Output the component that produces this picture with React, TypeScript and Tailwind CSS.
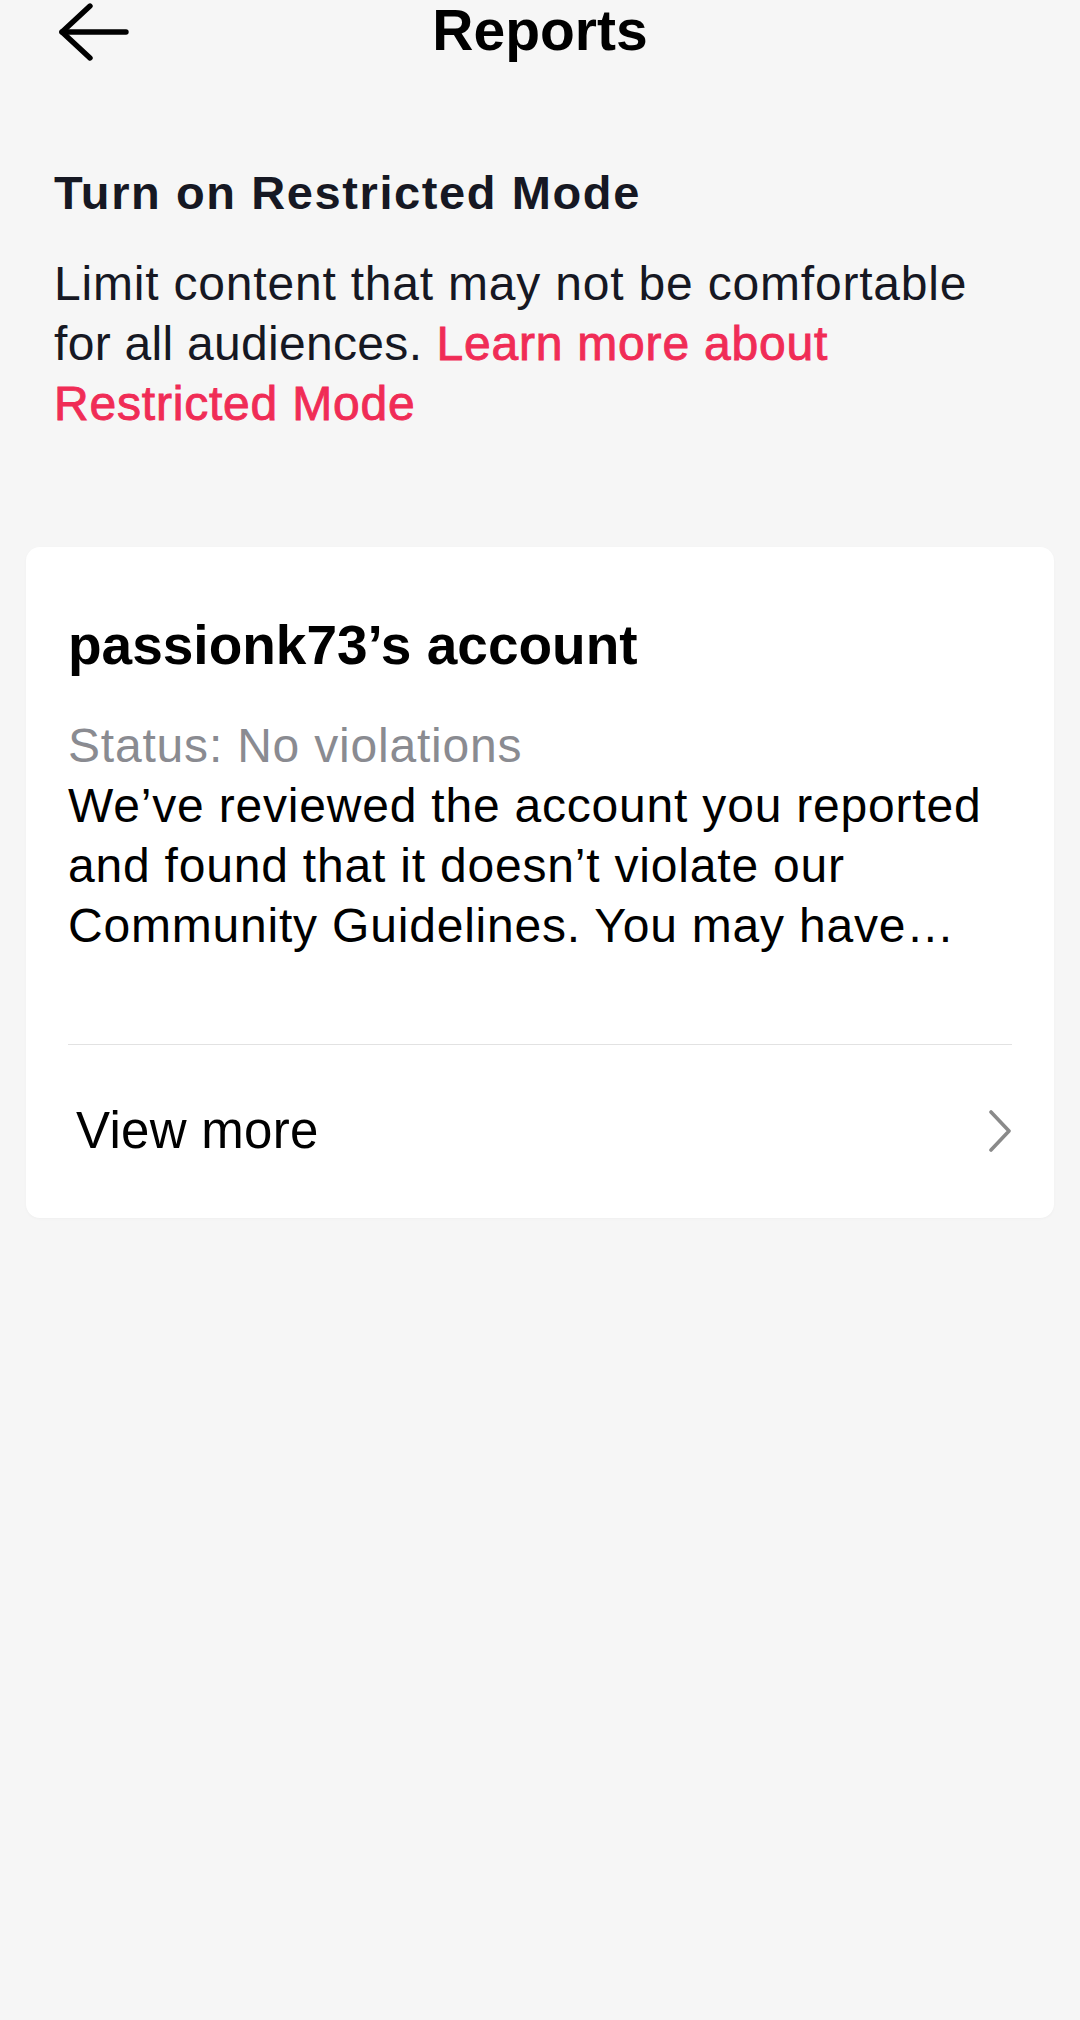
import React from 'react';

function BackArrow() {
  return (
    <svg width="70" height="60" viewBox="0 0 70 60" fill="none" stroke="#000" strokeWidth="5.4" strokeLinecap="round" strokeLinejoin="round">
      <path d="M67 30H3" />
      <path d="M31 4L3 30L31 56" />
    </svg>
  );
}

function Chevron() {
  return (
    <svg width="24" height="42" viewBox="0 0 24 42" fill="none" stroke="#8a8a8a" strokeWidth="3.6" strokeLinecap="round" strokeLinejoin="round">
      <path d="M3 2L21 21L3 40" />
    </svg>
  );
}

export default function App() {
  return (
    <div className="min-h-screen bg-[#f6f6f6] font-['Liberation_Sans',Arial,sans-serif] text-[#161823]">
      <header className="grid h-[64px] grid-cols-[1fr_auto_1fr] items-start">
        <div className="ml-[59px] mt-[2px]">
          <BackArrow />
        </div>
        <h1 className="text-[57px] font-bold leading-[60px] text-black">Reports</h1>
        <div />
      </header>

      <section className="pl-[54px] pr-[60px] pt-[101px]">
        <h2 className="text-[47px] font-bold leading-[56px] tracking-[1.6px]">Turn on Restricted Mode</h2>
        <p className="mt-[33px] text-[48px] leading-[60px] tracking-[0.8px]">
          <span>Limit content that may not be comfortable</span>{' '}
          <span className="tracking-[0.3px]">for all audiences.</span>{' '}
          <span className="text-[#f02c56] [-webkit-text-stroke:0.9px_#f02c56]">Learn more about</span>{' '}
          <span className="text-[#f02c56] [-webkit-text-stroke:0.9px_#f02c56]">Restricted Mode</span>
        </p>
      </section>

      <div className="mx-[26px] mt-[113px] rounded-[14px] bg-white px-[42px] pb-[57px] pt-[66px] text-black shadow-[0_1px_3px_rgba(0,0,0,0.03)]">
        <h3 className="text-[55px] font-bold leading-[64px]">passionk73’s account</h3>
        <div className="mt-[39px] text-[48px] leading-[60px] tracking-[0.8px]">
          <p className="text-[#8a8b91]">Status: No violations</p>
          <p>
            We’ve reviewed the account you reported and found that it doesn’t violate our Community
            Guidelines. You may have…
          </p>
        </div>
        <div className="mt-[88px] h-px bg-[#e2e2e2]" />
        <div className="mt-[56px] flex items-center justify-between pl-[8px]">
          <span className="text-[51px] leading-[60px] tracking-[0.3px]">View more</span>
          <Chevron />
        </div>
      </div>
    </div>
  );
}
